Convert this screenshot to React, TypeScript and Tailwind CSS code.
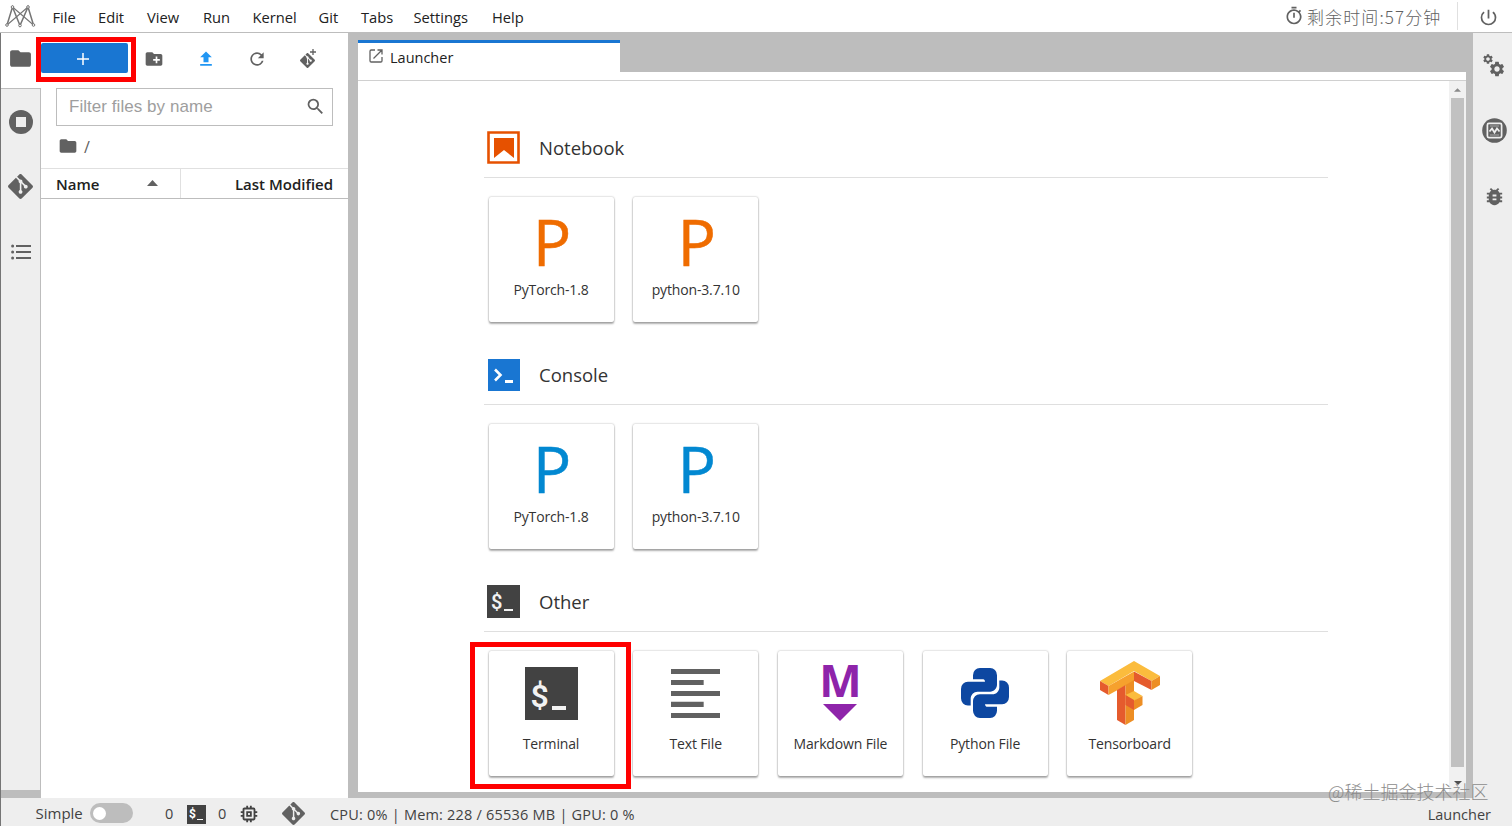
import React, { useState } from 'react';
import {
  MdFolder,
  MdCreateNewFolder,
  MdRefresh,
  MdSearch,
  MdBugReport,
  MdFileUpload,
  MdOutlineTimer,
  MdPowerSettingsNew,
  MdMemory,
  MdSettings,
} from 'react-icons/md';
import { SiGit } from 'react-icons/si';

interface CardItem {
  label: string;
  icon: React.ReactNode;
  highlighted?: boolean;
}

interface SectionProps {
  title: string;
  icon: React.ReactNode;
  items: CardItem[];
}

const menuItems = [
  { label: 'File', width: 'w-[45.5px]' },
  { label: 'Edit', width: 'w-[49px]' },
  { label: 'View', width: 'w-[56px]' },
  { label: 'Run', width: 'w-[49.5px]' },
  { label: 'Kernel', width: 'w-[66px]' },
  { label: 'Git', width: 'w-[42.5px]' },
  { label: 'Tabs', width: 'w-[52.5px]' },
  { label: 'Settings', width: 'w-[78.5px]' },
  { label: 'Help', width: 'w-[50px]' },
];

function Logo() {
  return (
    <svg className="w-[32px] h-[25px]" viewBox="0 0 32 25" fill="none" stroke="#757575" strokeWidth="1.1">
      <path d="M3 21 8.500 3 16 21.500 24 3 29.500 21" strokeWidth="1.500" />
      <path d="M3 21 24 3M8.500 3 29.500 21" />
      <g fill="#ffffff" strokeWidth="1">
        <circle cx="3" cy="21" r="1.300" />
        <circle cx="8.500" cy="3" r="1.300" />
        <circle cx="16" cy="21.500" r="1.300" />
        <circle cx="24" cy="3" r="1.300" />
        <circle cx="29.500" cy="21" r="1.300" />
      </g>
    </svg>
  );
}

function TerminalGlyph({ large }: { large?: boolean }) {
  if (large) {
    return (
      <div className="relative w-[53px] h-[53px] bg-[#424242] text-[#f2f2f2]">
        <span className="absolute left-[6px] top-[8px] text-[32px] leading-[42px] font-semibold font-['Roboto',sans-serif]">$</span>
        <div className="absolute left-[27px] top-[39px] w-[14px] h-[4px] bg-[#f2f2f2]" />
      </div>
    );
  }
  return (
    <div className="relative w-[33px] h-[33px] bg-[#424242] text-[#f2f2f2]">
      <span className="absolute left-[4px] top-[4px] text-[20px] leading-[26px] font-semibold font-['Roboto',sans-serif]">$</span>
      <div className="absolute left-[17px] top-[24px] w-[9px] h-[2px] bg-[#f2f2f2]" />
    </div>
  );
}

function KernelLetter({ color }: { color: string }) {
  return (
    <span className={`pt-[6px] pl-[2px] text-[64px] leading-[64px] [-webkit-text-stroke:0.5px_currentColor] ${color}`}>P</span>
  );
}

function TextFileIcon() {
  return (
    <svg className="w-[49px] h-[49px]" viewBox="0 0 48 48" fill="#616161">
      <path d="M0 0h48v5H0zM0 10.700h32v5H0zM0 21.500h48v5H0zM0 32.200h32v5H0zM0 43h48v5H0z" />
    </svg>
  );
}

function MarkdownIcon() {
  return (
    <div className="-mt-[8px] flex flex-col items-center text-[#8e24aa]">
      <span className="h-[46px] text-[45px] leading-[44px] font-bold">M</span>
      <svg className="w-[34px] h-[17px]" viewBox="0 0 34 17" fill="currentColor">
        <path d="M0 0h34L17 17z" />
      </svg>
    </div>
  );
}

function PythonIcon() {
  return (
    <svg className="w-[48px] h-[50px]" viewBox="2 2.500 20 20" preserveAspectRatio="none" fill="#0d47a1">
      <path d="M19.140 7.500A2.860 2.860 0 0 1 22 10.360v3.780A2.860 2.860 0 0 1 19.140 17H12c0 .39.32.96.71.96H17v1.680a2.860 2.860 0 0 1-2.860 2.860H9.860A2.860 2.860 0 0 1 7 19.640v-3.750c0-1.580 1.280-2.850 2.860-2.850h5.250c1.580 0 2.850-1.280 2.850-2.860V7.500z" />
      <path d="M4.860 17.500A2.860 2.860 0 0 1 2 14.640v-3.780A2.860 2.860 0 0 1 4.860 8H12c0-.39-.32-.96-.71-.96H7V5.360A2.860 2.860 0 0 1 9.860 2.500h4.280A2.860 2.860 0 0 1 17 5.360v3.750c0 1.580-1.280 2.850-2.860 2.850H8.890c-1.580 0-2.850 1.280-2.850 2.860v2.680z" />
    </svg>
  );
}

function TensorboardIcon() {
  return (
    <svg className="w-[60px] h-[64px]" viewBox="0 0 60 64">
      <path d="M0 20 34 0 60 15 51.500 20 34 10 8.500 25z" fill="#fbbc3d" />
      <path d="M0 20 8.500 25V34L0 29z" fill="#e55b2d" />
      <path d="M8.500 25 34 10.500V20L8.500 34z" fill="#f6a12d" />
      <path d="M34 10.500 51.500 20v9L34 20z" fill="#e55b2d" />
      <path d="M51.500 20 60 15v9l-8.500 5z" fill="#ed8e24" />
      <path d="M17 29 25.500 24V64L17 59z" fill="#e55b2d" />
      <path d="M25.500 24 34 19V59l-8.500 5z" fill="#ed8e24" />
      <path d="M25.500 34 34 30 42.500 35 34 40z" fill="#fbbc3d" />
      <path d="M25.500 34 34 39v10l-8.500-5z" fill="#e55b2d" />
      <path d="M34 39.500 42.500 35v9L34 49z" fill="#ed8e24" />
    </svg>
  );
}

function NotebookIcon() {
  return (
    <svg className="w-[33px] h-[33px]" viewBox="0 0 33 33">
      <path d="M1.500 1.500h30v30h-30z" fill="none" stroke="#e65100" strokeWidth="2.600" />
      <path d="M7 7h20v20l-10-8-10 8z" fill="#e65100" />
    </svg>
  );
}

function ConsoleIcon() {
  return (
    <svg className="w-[32px] h-[32px]" viewBox="0 0 32 32">
      <path d="M0 0h32v32H0z" fill="#1976d2" />
      <path d="m7 10.500 5.500 5.500L7 21.500" fill="none" stroke="#ffffff" strokeWidth="2.600" />
      <path d="M17 21h8v3h-8z" fill="#ffffff" />
    </svg>
  );
}

function LauncherIcon() {
  return (
    <svg className="w-[14px] h-[14px] -mt-[3px]" viewBox="0 0 14 14" fill="none" stroke="#616161" strokeWidth="1.300">
      <path d="M6 1H2.200A1.200 1.200 0 0 0 1 2.200v9.600A1.200 1.200 0 0 0 2.200 13h9.600a1.200 1.200 0 0 0 1.200-1.200V8M8.500 1H13v4.500M13 1 4.500 9.500" />
    </svg>
  );
}

function RunningIcon() {
  return (
    <svg className="w-[24px] h-[24px] -mt-px" viewBox="0 0 24 24">
      <circle cx="12" cy="12" r="12" fill="#616161" />
      <path d="M7 7h10v10H7z" fill="#eeeeee" />
    </svg>
  );
}

function ListIcon() {
  return (
    <svg className="w-[20px] h-[16px] -mt-[2px]" viewBox="0 0 20 16" fill="#616161">
      <path d="M5 1h15v2H5zM5 7h15v2H5zM5 13h15v2H5z" />
      <circle cx="1.600" cy="2" r="1.500" />
      <circle cx="1.600" cy="8" r="1.500" />
      <circle cx="1.600" cy="14" r="1.500" />
    </svg>
  );
}

function GearsIcon() {
  return (
    <div className="relative w-[22px] h-[22px] text-[#616161]">
      <MdSettings className="absolute -left-px -top-[2px] w-[12px] h-[12px]" />
      <MdSettings className="absolute left-[5px] top-[5px] w-[18px] h-[18px]" />
    </div>
  );
}

function MonitorIcon() {
  return (
    <svg className="w-[25px] h-[25px] -mt-[2px]" viewBox="0 0 25 25" fill="none">
      <circle cx="12.500" cy="12.500" r="12.300" fill="#616161" />
      <rect x="5.400" y="5.400" width="14.200" height="14.200" rx="1.500" stroke="#eeeeee" strokeWidth="1.700" />
      <path d="M7.500 13.500 10 10.500l2.500 4 2.500-4 2.500 3" stroke="#eeeeee" strokeWidth="1.800" />
      <path d="M8 8h9M8 17h9" stroke="#eeeeee" strokeWidth=".5" />
    </svg>
  );
}

function LauncherCard({ item }: { item: CardItem }) {
  return (
    <div className="relative w-[125px] h-[125px] bg-white rounded-[2px] shadow-[0_0_2px_0_rgba(0,0,0,0.35),0_2px_2px_0_rgba(0,0,0,0.3)] flex flex-col items-center">
      <div className="h-[84px] flex items-center justify-center">{item.icon}</div>
      <span className="text-[14px] leading-[18px] tracking-[-0.15px] text-[#333333] whitespace-nowrap">{item.label}</span>
      {item.highlighted && (
        <div className="absolute -left-[19px] -top-[9px] w-[161px] h-[147px] border-[5px] border-[#ff0000]" />
      )}
    </div>
  );
}

function LauncherSection({ title, icon, items }: SectionProps) {
  return (
    <section className="h-[227px]">
      <div className="h-[63px] ml-[-4px] w-[844px] pl-[3px] pb-[13px] border-b border-[#dfdfdf] flex items-end">
        <div className="w-[33px] h-[33px] flex items-center justify-center">{icon}</div>
        <h2 className="ml-[19px] h-[33px] text-[18.500px] leading-[34px] text-[#333333]">{title}</h2>
      </div>
      <div className="mt-[19px] pl-[0.5px] flex gap-[19.700px]">
        {items.map(item => (
          <LauncherCard key={item.label} item={item} />
        ))}
      </div>
    </section>
  );
}

export default function App() {
  const [filter, setFilter] = useState('');
  const [simple, setSimple] = useState(false);

  const kernelCards = (color: string): CardItem[] => [
    { label: 'PyTorch-1.8', icon: <KernelLetter color={color} /> },
    { label: 'python-3.7.10', icon: <KernelLetter color={color} /> },
  ];

  const otherCards: CardItem[] = [
    { label: 'Terminal', icon: <TerminalGlyph large />, highlighted: true },
    { label: 'Text File', icon: <TextFileIcon /> },
    { label: 'Markdown File', icon: <MarkdownIcon /> },
    { label: 'Python File', icon: <PythonIcon /> },
    { label: 'Tensorboard', icon: <TensorboardIcon /> },
  ];

  return (
    <div className="relative w-[1512px] h-[826px] overflow-hidden flex flex-col bg-white text-[#212121] font-['Open_Sans','Noto_Sans_CJK_SC',sans-serif]">
      {/* Menu bar */}
      <header className="h-[33px] shrink-0 border-b border-[#bdbdbd] flex items-center">
        <div className="w-[52.5px] pl-[4px]">
          <Logo />
        </div>
        <nav className="flex text-[14.700px] leading-[20px] pt-px">
          {menuItems.map(item => (
            <button key={item.label} className={`text-left ${item.width}`}>{item.label}</button>
          ))}
        </nav>
        <div className="ml-auto flex items-center text-[#616161]">
          <MdOutlineTimer className="w-[20px] h-[20px]" />
          <span className="ml-[3px] w-[150px] pt-[2px] text-[17px] leading-[24px] tracking-[1.1px] font-light whitespace-nowrap font-['Noto_Sans_CJK_SC',sans-serif]">剩余时间:57分钟</span>
          <div className="w-[55px] h-[28px] border-l border-[#e0e0e0] flex items-center pl-[20px]">
            <MdPowerSettingsNew className="w-[21px] h-[21px] mt-[2px]" />
          </div>
        </div>
      </header>

      <div className="h-[765px] flex">
        {/* Left activity bar */}
        <aside className="w-[41px] shrink-0 flex flex-col bg-[#bdbdbd] border-l border-[#757575]">
          <div className="h-[55px] bg-white flex items-center pl-[7px] text-[#616161]">
            <MdFolder className="w-[25px] h-[25px] -mt-[5px]" />
          </div>
          <div className="h-[702px] bg-[#eeeeee] border-t border-r border-[#bdbdbd] flex flex-col items-center text-[#616161]">
            <div className="h-[66px] flex items-center"><RunningIcon /></div>
            <div className="h-[65px] flex items-center"><SiGit className="w-[25px] h-[25px] -mt-[2px]" /></div>
            <div className="h-[65px] flex items-center"><ListIcon /></div>
          </div>
        </aside>

        {/* File browser */}
        <section className="w-[307px] shrink-0 bg-white text-[#616161]">
          <div className="h-[55px] pt-[10px] flex">
            <div className="relative w-[87px] h-[29px]">
              <button className="w-[87px] h-[30px] bg-[#1976d2] rounded-[2px] flex items-center justify-center">
                <svg className="w-[12px] h-[12px] -ml-[3px] mt-[2px]" viewBox="0 0 12 12" stroke="#ffffff" strokeWidth="1.500">
                  <path d="M6 0v12M0 6h12" />
                </svg>
              </button>
              <div className="absolute -left-[5px] -top-[6px] w-[100px] h-[45px] border-[5px] border-[#ff0000]" />
            </div>
            <div className="h-[32px] flex items-center">
              <div className="w-[52px] flex justify-center"><MdCreateNewFolder className="w-[20px] h-[20px]" /></div>
              <div className="w-[52px] flex justify-center"><MdFileUpload className="w-[20px] h-[20px] text-[#2196f3]" /></div>
              <div className="w-[50px] flex justify-center"><MdRefresh className="w-[20px] h-[20px]" /></div>
              <div className="relative w-[51px] flex justify-center">
                <SiGit className="w-[15px] h-[15px] mt-[3px]" />
                <svg className="absolute left-[28px] -top-[1px] w-[6px] h-[6px]" viewBox="0 0 7 7" stroke="currentColor" strokeWidth="1.500">
                  <path d="M3.500 0v7M0 3.500h7" />
                </svg>
              </div>
            </div>
          </div>
          <div className="ml-[15px] w-[277px] h-[38px] border border-[#bdbdbd] flex items-center pl-[12px] pr-[6px]">
            <input
              value={filter}
              onChange={e => setFilter(e.target.value)}
              placeholder="Filter files by name"
              className="flex-1 min-w-0 outline-none text-[17px] leading-[24px] placeholder:text-[#9e9e9e] tracking-[0.05px] font-['Liberation_Sans',sans-serif]"
            />
            <MdSearch className="w-[21px] h-[21px] -mt-[2px]" />
          </div>
          <div className="h-[42px] pl-[17px] flex items-center gap-[6px]">
            <MdFolder className="w-[20px] h-[20px] -mt-[2px]" />
            <span className="text-[16px] leading-[20px]">/</span>
          </div>
          <div className="h-[31px] border-t border-b border-t-[#e0e0e0] border-b-[#bdbdbd] flex text-[15px] leading-[31px] font-semibold text-[#212121]">
            <div className="w-[140px] pl-[15px] pr-[22px] border-r border-[#e0e0e0] flex items-center justify-between">
              <span className="pt-px">Name</span>
              <svg className="w-[11px] h-[6px] -mt-[2px]" viewBox="0 0 11 6" fill="#616161">
                <path d="M5.500 0 11 6H0z" />
              </svg>
            </div>
            <div className="flex-1 pr-[15px] text-right">Last Modified</div>
          </div>
        </section>

        {/* Main dock */}
        <main className="flex-1 min-w-0 bg-[#bdbdbd] pl-[10px] pr-[7px] pt-[7px] pb-[6px] flex flex-col">
          <div className="w-[262px] h-[32px] bg-white border-t-[3px] border-[#1976d2] flex items-center pl-[11px] text-[14.500px]">
            <LauncherIcon />
            <span className="ml-[7px] leading-[20px]">Launcher</span>
          </div>
          <div className="h-[9px] bg-white border-b border-[#d0d0d0]" />
          <div className="flex-1 min-h-0 bg-white flex justify-between overflow-hidden">
            <div className="pl-[130px] pt-[34px]">
              <LauncherSection title="Notebook" icon={<NotebookIcon />} items={kernelCards('text-[#ef6c00]')} />
              <LauncherSection title="Console" icon={<ConsoleIcon />} items={kernelCards('text-[#0288d1]')} />
              <LauncherSection title="Other" icon={<TerminalGlyph />} items={otherCards} />
            </div>
            <div className="w-[17px] bg-[#f1f1f1] flex flex-col items-center">
              <svg className="w-[7px] h-[4px] mt-[7px] shrink-0" viewBox="0 0 8 4" fill="#8a8a8a"><path d="M4 0l4 4H0z" /></svg>
              <div className="mt-[6px] w-[13px] h-[669px] shrink-0 bg-[#c1c1c1]" />
              <svg className="w-[8px] h-[4px] mt-[14px] shrink-0" viewBox="0 0 8 4" fill="#505050"><path d="M0 0h8L4 4z" /></svg>
            </div>
          </div>
        </main>

        {/* Right activity bar */}
        <aside className="w-[39px] shrink-0 bg-[#eeeeee] flex flex-col items-center pl-[3px] text-[#616161]">
          <div className="h-[66px] flex items-center"><GearsIcon /></div>
          <div className="h-[64px] flex items-center"><MonitorIcon /></div>
          <div className="h-[67px] flex items-center"><MdBugReport className="w-[23px] h-[23px] -mt-px" /></div>
        </aside>
      </div>

      {/* Status bar */}
      <footer className="h-[28px] shrink-0 bg-[#eeeeee] border-l border-[#757575] flex items-center text-[14.500px] leading-[20px] text-[#424242]">
        <span className="w-[55px] pl-[34.500px] pt-px shrink-0 whitespace-nowrap text-[15px]">Simple</span>
        <button
          onClick={() => setSimple(!simple)}
          className={`ml-[34px] mt-[2px] w-[43px] h-[20px] px-[3px] rounded-full flex items-center ${simple ? 'bg-[#1976d2] justify-end' : 'bg-[#bdbdbd]'}`}
        >
          <span className="w-[13px] h-[13px] rounded-full bg-white" />
        </button>
        <span className="ml-[32px] w-[22px] pt-[4px]">0</span>
        <div className="relative w-[19px] h-[19px] mt-[5px] bg-[#424242] text-white">
          <span className="absolute left-[2px] top-[1px] text-[12px] leading-[16px] font-bold font-['Roboto',sans-serif]">$</span>
          <div className="absolute left-[10px] top-[14px] w-[6px] h-[1px] bg-white" />
        </div>
        <span className="ml-[12px] w-[20px] pt-[4px]">0</span>
        <MdMemory className="w-[22px] h-[22px] mt-[3px] text-[#424242]" />
        <SiGit className="ml-[22px] w-[23px] h-[23px] mt-[2px] text-[#616161]" />
        <span className="ml-[25px] pt-[6px] whitespace-nowrap tracking-[0.21px]">CPU: 0% | Mem: 228 / 65536 MB | GPU: 0 %</span>
        <span className="ml-auto pr-[21px] pt-[6px]">Launcher</span>
      </footer>

      {/* Watermark */}
      <div className="absolute left-[1328px] top-[778px] text-[18px] leading-[26px] whitespace-nowrap text-[#8c8c8c] font-light font-['Noto_Sans_CJK_SC',sans-serif]">@稀土掘金技术社区</div>
    </div>
  );
}
